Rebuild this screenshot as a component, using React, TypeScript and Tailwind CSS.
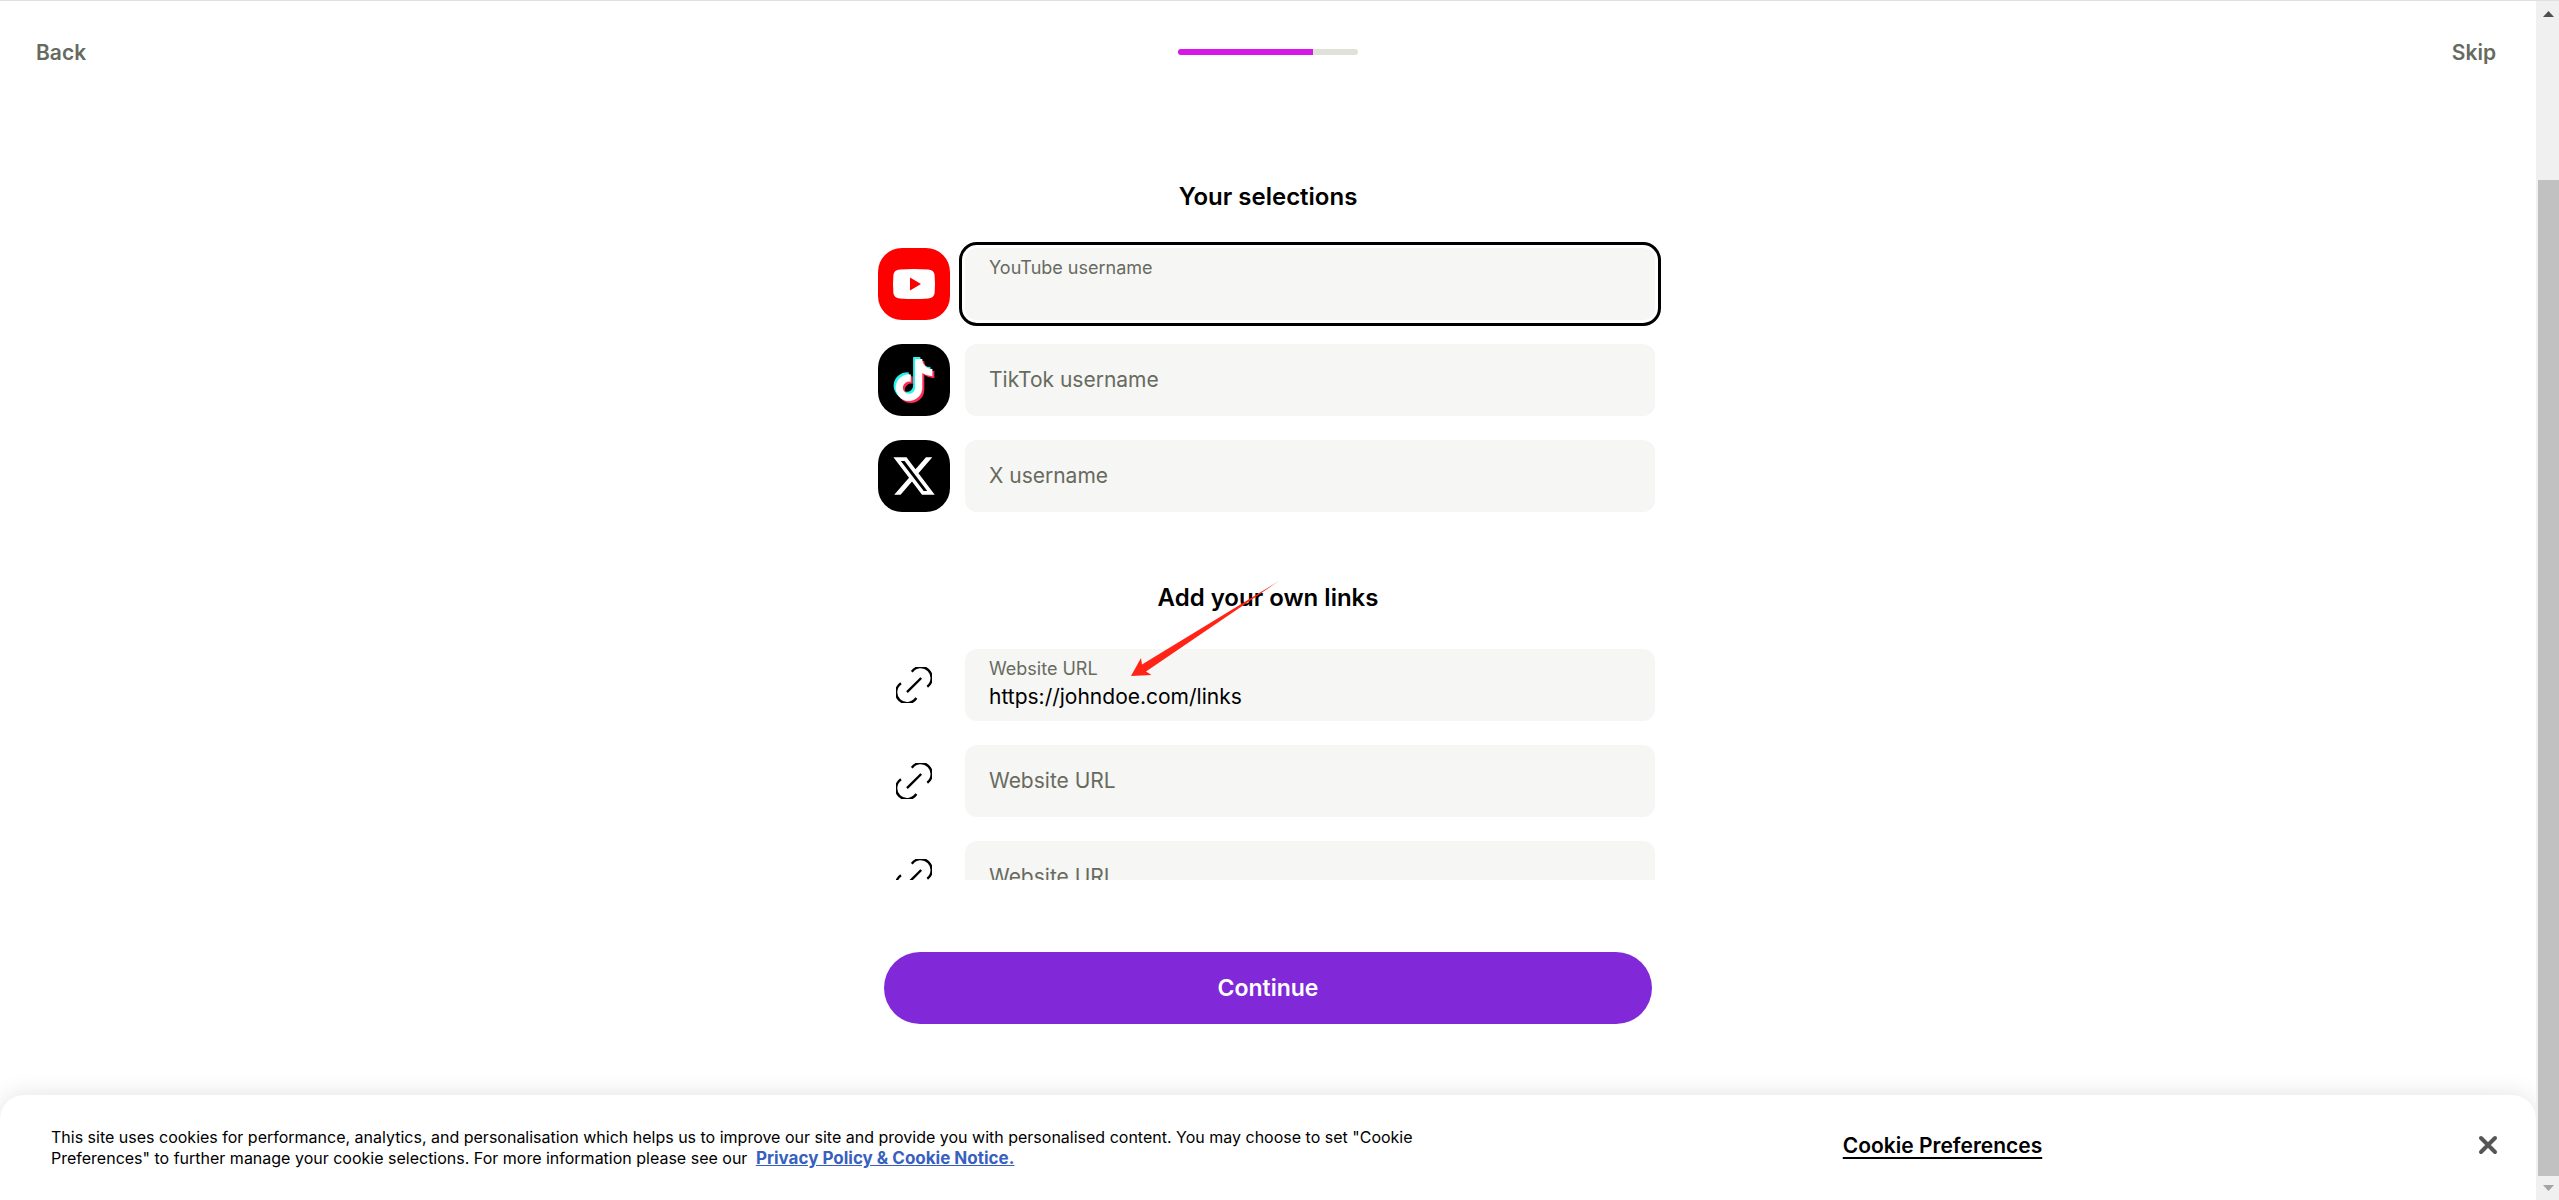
import React, { useState } from 'react';
import { FaTiktok, FaXTwitter } from 'react-icons/fa6';

const FONT = "font-['Inter','Liberation_Sans',sans-serif]";

const SOCIALS = [
  { id: 'youtube', label: 'YouTube username', tile: 'bg-[#ff0000]', icon: YouTubeLogo },
  { id: 'tiktok', label: 'TikTok username', tile: 'bg-black', icon: TikTokLogo },
  { id: 'x', label: 'X username', tile: 'bg-black', icon: XLogo },
];

function YouTubeLogo() {
  return (
    <svg viewBox="0 0 72 72" className="size-18" aria-hidden="true">
      <path d="M22 21.600Q36 20.400 50 21.600Q56 22 56.600 27Q57.400 36 56.600 45Q56 50.200 50 50.600Q36 51.600 22 50.600Q16 50.200 15.400 45Q14.600 36 15.400 27Q16 22 22 21.600Z" fill="#fff" />
      <path d="M32 29.500V42.500L43 36Z" fill="#ff0000" />
    </svg>
  );
}

function TikTokLogo() {
  return (
    <span className="grid size-18 place-items-center">
      <FaTiktok className="col-start-1 row-start-1 mr-1 mb-1 size-[42px] text-[#25f4ee]" />
      <FaTiktok className="col-start-1 row-start-1 mt-1 ml-1 size-[42px] text-[#fe2c55]" />
      <FaTiktok className="col-start-1 row-start-1 size-[42px] text-white" />
    </span>
  );
}

function XLogo() {
  return <FaXTwitter className="size-[46px] text-white" />;
}

function LinkIcon() {
  return (
    <svg viewBox="0 0 36 36" className="size-9" fill="none" stroke="#000" strokeWidth="2.4" aria-hidden="true">
      <path d="M15.800 4.800A10.900 10.900 0 1 1 31.300 19.700" />
      <path d="M5 16.200A10.900 10.900 0 1 0 20.300 31" />
      <path d="M11 25.200L25.200 11" />
    </svg>
  );
}

interface FieldProps {
  id: string;
  label: string;
  value: string;
  focused?: boolean;
  onChange: (value: string) => void;
}

const Field: React.FC<FieldProps> = ({ id, label, value, focused, onChange }) => {
  const raised = focused || value !== '';
  return (
    <div className={`relative h-18 min-w-0 flex-1 rounded-xl bg-[#f6f6f4] ${focused ? 'outline-3 outline-offset-3 outline-black' : ''}`}>
      <label
        htmlFor={id}
        className={`pointer-events-none absolute left-6 text-[#676b5f] ${raised ? 'top-2 text-[18px] leading-6' : 'top-5 text-[21px] leading-8'}`}
      >
        {label}
      </label>
      <input
        id={id}
        type="text"
        value={value}
        onChange={e => onChange(e.target.value)}
        className="h-full w-full rounded-xl bg-transparent px-6 pt-[22px] text-[21px] text-black outline-none"
      />
    </div>
  );
};

function Scrollbar() {
  return (
    <div className="flex w-[23px] shrink-0 flex-col items-center bg-[#f0f0f0]" aria-hidden="true">
      <svg viewBox="0 0 23 24" className="h-6 w-full"><path d="M7 16L12.500 10L18 16Z" fill="#505050" /></svg>
      <div className="flex w-full flex-1 flex-col pt-[155px] pl-0.5">
        <div className="flex-1 bg-[#c1c1c1]" />
      </div>
      <svg viewBox="0 0 23 24" className="h-6 w-full"><path d="M7 9L12.500 15L18 9Z" fill="#a3a3a3" /></svg>
    </div>
  );
}

export default function App() {
  const [names, setNames] = useState<Record<string, string>>({});
  const [links, setLinks] = useState(['https://johndoe.com/links', '', '']);
  const [showCookies, setShowCookies] = useState(true);

  return (
    <div className={`flex h-screen border-t border-[#e0e0e0] bg-white text-black antialiased ${FONT}`}>
      <div className="flex min-w-0 flex-1 flex-col">
        <header className="grid h-[102px] shrink-0 grid-cols-3 items-center px-9 text-[21px] font-semibold text-[#676b5f]">
          <button type="button" className="justify-self-start pt-0.5">Back</button>
          <div className="h-1.5 w-[180px] justify-self-center overflow-hidden rounded-full bg-[#e0e2d9]">
            <div className="h-full w-3/4 bg-[#d717e7]" />
          </div>
          <button type="button" className="justify-self-end pt-0.5 pr-1">Skip</button>
        </header>

        <main className="mx-auto flex min-h-0 w-full max-w-[780px] flex-1 flex-col">
          <div className="-mx-3 h-[777px] shrink-0 overflow-hidden px-3 pt-[76px]">
            <h2 className="text-center text-[24px] leading-9 font-semibold">Your selections</h2>
            <div className="mt-[33px] flex flex-col gap-6 pr-[3px]">
              {SOCIALS.map(({ id, label, tile, icon: Icon }) => (
                <div key={id} className="flex gap-[15px]">
                  <div className={`flex size-18 shrink-0 items-center justify-center rounded-3xl ${tile}`}>
                    <Icon />
                  </div>
                  <Field
                    id={id}
                    label={label}
                    value={names[id] || ''}
                    focused={id === 'youtube'}
                    onChange={v => setNames({ ...names, [id]: v })}
                  />
                </div>
              ))}
            </div>

            <div className="relative z-10 mt-[68px]">
              <h2 className="text-center text-[24px] leading-9 font-semibold">Add your own links</h2>
              <svg viewBox="0 0 150 98" className="pointer-events-none absolute top-0 left-[252px] h-[98px] w-[150px]" aria-hidden="true">
                <path d="M1 96L11 78L12 84.500L149 1L16 91.500L21.500 95Z" fill="#ff2415" />
              </svg>
            </div>
            <div className="mt-[33px] flex flex-col gap-6 pr-[3px]">
              {links.map((link, i) => (
                <div key={i} className="flex gap-[15px]">
                  <div className="flex size-18 shrink-0 items-center justify-center">
                    <LinkIcon />
                  </div>
                  <Field
                    id={`link-${i}`}
                    label="Website URL"
                    value={link}
                    onChange={v => setLinks(links.map((l, j) => (j === i ? v : l)))}
                  />
                </div>
              ))}
            </div>
          </div>

          <button type="button" className="mx-auto mt-[72px] h-18 w-full max-w-3xl shrink-0 rounded-full bg-[#8129d9] text-[23px] font-semibold text-white">
            Continue
          </button>
        </main>

        {showCookies && (
          <footer className="flex h-[105px] shrink-0 items-center rounded-t-3xl bg-white pr-[34px] pl-[51px] shadow-[0_0_24px_rgba(0,0,0,0.12)]">
            <p className="w-[1376px] shrink-0 text-[16px] leading-[21px]">
              This site uses cookies for performance, analytics, and personalisation which helps us to improve our site and provide you with personalised content. You may choose to set "Cookie
              Preferences" to further manage your cookie selections. For more information please see our{' '}
              <a href="#privacy" className="ml-1 text-[17px] font-bold text-[#3860be] underline">Privacy Policy &amp; Cookie Notice.</a>
            </p>
            <div className="flex flex-1 justify-center pr-4">
              <button type="button" className="mb-1 text-[21px] font-semibold underline decoration-2 underline-offset-4">Cookie Preferences</button>
            </div>
            <button type="button" aria-label="Close" onClick={() => setShowCookies(false)} className="mb-1.5 p-1">
              <svg viewBox="0 0 20 20" className="size-5" stroke="#565656" strokeWidth="4" strokeLinecap="round" aria-hidden="true">
                <path d="M3 3L17 17M17 3L3 17" />
              </svg>
            </button>
          </footer>
        )}
      </div>
      <Scrollbar />
    </div>
  );
}
